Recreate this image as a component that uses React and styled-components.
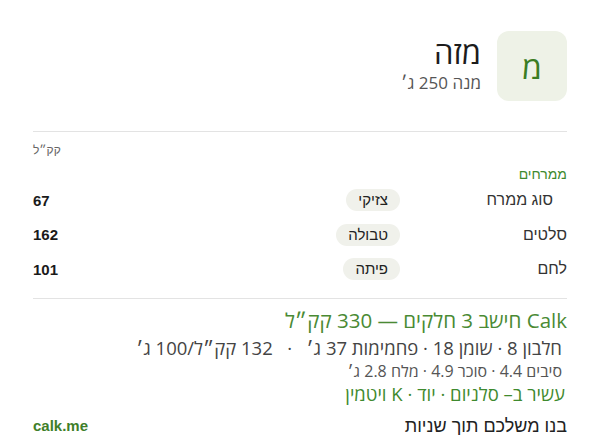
import React from "react";
import styled, { createGlobalStyle } from "styled-components";

const GlobalStyle = createGlobalStyle`
  body {
    margin: 0;
    background: #fff;
    font-family: "Open Sans", "Noto Sans", sans-serif;
  }
`;

const spreads = [
  { kind: "סוג ממרח", pick: "צזיקי", kcal: 67, indent: true },
  { kind: "סלטים", pick: "טבולה", kcal: 162 },
  { kind: "לחם", pick: "פיתה", kcal: 101 },
];

const App = () => {
  return (
    <>
      <GlobalStyle />
      <Card dir="rtl">
        <Header>
          <Badge>מ</Badge>
          <TitleBlock>
            <Title>מזה</Title>
            <Serving>מנה 250 ג׳</Serving>
          </TitleBlock>
        </Header>

        <Divider />

        <UnitNote>קק״ל</UnitNote>
        <GroupTitle>ממרחים</GroupTitle>
        {spreads.map((s) => (
          <Row key={s.kind}>
            <Label $indent={s.indent}>{s.kind}</Label>
            <PickCell>
              <Pill>{s.pick}</Pill>
            </PickCell>
            <Kcal>{s.kcal}</Kcal>
          </Row>
        ))}

        <Divider $top={11} />

        <Summary>
          <Total>Calk חישב 3 חלקים — 330 קק״ל</Total>
          <Macros>חלבון 8 · שומן 18 · פחמימות 37 ג׳&nbsp;&nbsp;&nbsp;·&nbsp;&nbsp;&nbsp;132 קק״ל/100 ג׳</Macros>
          <Minor>סיבים 4.4 · סוכר 4.9 · מלח 2.8 ג׳</Minor>
          <Rich>עשיר ב– סלניום · יוד · K ויטמין</Rich>
        </Summary>

        <Footer>
          <Tagline>בנו משלכם תוך שניות</Tagline>
          <Brand>calk.me</Brand>
        </Footer>
      </Card>
    </>
  );
};

const Card = styled.div`
  width: 534px;
  margin-left: 33px;
  padding-top: 31px;
`;

const Header = styled.div`
  display: flex;
  align-items: center;
  gap: 16px;
`;

const Badge = styled.div`
  width: 70px;
  height: 70px;
  border-radius: 12px;
  background: #eef2e7;
  color: #3b7d23;
  font-size: 32px;
  display: flex;
  align-items: center;
  justify-content: center;
`;

const TitleBlock = styled.div`
  display: flex;
  flex-direction: column;
  gap: 4px;
  margin-top: -4px;
`;

const Title = styled.div`
  font-size: 31px;
  color: #1c1c1c;
  line-height: 34px;
`;

const Serving = styled.div`
  font-size: 17px;
  color: #555;
  line-height: 20px;
`;

const Divider = styled.div`
  height: 1px;
  background: #e3e3e3;
  margin-top: ${(p) => p.$top ?? 30}px;
`;

const UnitNote = styled.div`
  font-family: "Liberation Sans", sans-serif;
  font-size: 12px;
  color: #666;
  text-align: left;
  margin-top: 10px;
  line-height: 16px;
`;

const GroupTitle = styled.div`
  font-family: "Liberation Sans", sans-serif;
  font-size: 14px;
  color: #3f8a2f;
  margin-top: 7px;
  line-height: 18px;
`;

const Row = styled.div`
  display: grid;
  grid-template-columns: 167px 1fr 80px;
  align-items: center;
  height: 34.5px;
  font-family: "Liberation Sans", sans-serif;
`;

const Label = styled.div`
  font-size: 16px;
  color: #333;
  padding-right: ${(p) => (p.$indent ? 14 : 0)}px;
`;

const PickCell = styled.div`
  display: flex;
`;

const Pill = styled.span`
  background: #f0f1eb;
  border-radius: 11px;
  padding: 2px 12px;
  font-size: 15px;
  color: #222;
  line-height: 18px;
`;

const Kcal = styled.div`
  text-align: left;
  font-weight: bold;
  font-size: 15px;
  color: #1a1a1a;
`;

const Summary = styled.div`
  display: flex;
  flex-direction: column;
  margin-top: 8px;
`;

const Total = styled.div`
  font-size: 20.5px;
  color: #4a8a34;
  line-height: 26px;
`;

const Macros = styled.div`
  font-size: 18.5px;
  color: #444;
  line-height: 24px;
  margin-top: 3px;
  padding-right: 5px;
`;

const Minor = styled.div`
  font-size: 16px;
  color: #555;
  line-height: 20px;
  margin-top: 1px;
  padding-right: 5px;
`;

const Rich = styled.div`
  font-size: 18.5px;
  color: #3f8a2f;
  line-height: 24px;
  margin-top: 1px;
  padding-right: 2px;
`;

const Footer = styled.div`
  display: flex;
  justify-content: space-between;
  align-items: center;
  margin-top: 8px;
  line-height: 24px;
`;

const Tagline = styled.div`
  font-family: "Liberation Sans", sans-serif;
  font-size: 18px;
  color: #222;
`;

const Brand = styled.div`
  font-family: "Liberation Sans", sans-serif;
  font-weight: bold;
  font-size: 15px;
  color: #3f7f2a;
`;

export default App;
